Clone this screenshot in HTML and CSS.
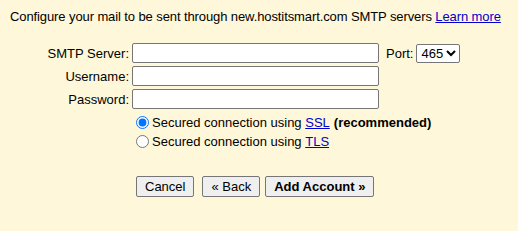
FILE: index.html
```html
<!DOCTYPE html>
<html lang="en">
<head>
    <meta charset="UTF-8">
    <title>Add Mail Account</title>
    <link rel="stylesheet" href="styles.css">
</head>
<body>
    <div class="page">
        <p class="intro">Configure your mail to be sent through new.hostitsmart.com SMTP servers <a href="#">Learn more</a></p>

        <div class="form">
            <label class="lbl" for="server">SMTP Server:</label>
            <div class="field-row">
                <input type="text" id="server" class="txt">
                <label class="port-lbl" for="port">Port:</label>
                <select id="port" class="port">
                    <option>465</option>
                    <option>587</option>
                    <option>25</option>
                </select>
            </div>

            <label class="lbl" for="user">Username:</label>
            <div class="field-row">
                <input type="text" id="user" class="txt">
            </div>

            <label class="lbl" for="pass">Password:</label>
            <div class="field-row">
                <input type="password" id="pass" class="txt">
            </div>

            <div></div>
            <div class="security">
                <label class="opt"><input type="radio" name="sec" checked>Secured connection using <a href="#">SSL</a> <b>(recommended)</b></label>
                <label class="opt"><input type="radio" name="sec">Secured connection using <a href="#">TLS</a></label>
            </div>
        </div>

        <div class="buttons">
            <button class="btn">Cancel</button>
            <button class="btn">&laquo; Back</button>
            <button class="btn primary">Add Account &raquo;</button>
        </div>
    </div>
</body>
</html>
```

FILE: styles.css
```css
body {
    margin: 0;
    background: #fff7d9;
    font-family: 'Liberation Sans', Arial, sans-serif;
    font-size: 13px;
    color: #000;
}
.page {
    padding: 9px 10px;
}
a {
    color: #0000cc;
}
.intro {
    margin: 0 0 18px 0;
    line-height: 16px;
    white-space: nowrap;
    letter-spacing: -0.1px;
}
.form {
    display: grid;
    grid-template-columns: 119px auto;
    column-gap: 3px;
    row-gap: 3px;
    align-items: center;
}
.lbl {
    text-align: right;
}
.field-row {
    display: flex;
    align-items: center;
}
.txt {
    box-sizing: border-box;
    width: 247px;
    height: 20px;
    margin: 0;
    border: 1px solid #767676;
    border-radius: 2px;
    background: #fff;
    font: inherit;
}
.port-lbl {
    margin-left: 7px;
    margin-right: 3px;
}
.port {
    box-sizing: border-box;
    height: 19px;
    width: 44px;
    border: 1px solid #767676;
    border-radius: 2px;
    background: #fff;
    font: inherit;
    font-size: 13px;
    padding: 0;
}
.security {
    padding-top: 1px;
    padding-left: 4px;
}
.opt {
    display: flex;
    align-items: center;
    height: 19px;
    white-space: pre;
}
.opt input {
    margin: 0 3px 0 0;
    width: 13px;
    height: 13px;
}
.opt b {
    margin-left: 4px;
}
.buttons {
    display: flex;
    gap: 8px;
    padding-left: 126px;
    margin-top: 25px;
}
.btn {
    font: inherit;
    font-size: 13px;
    height: 21px;
    padding: 0 8px;
    background: #efefef;
    border: 1px solid #767676;
    border-radius: 2px;
    color: #000;
}
.primary {
    font-weight: bold;
    margin-left: -3px;
}
```
